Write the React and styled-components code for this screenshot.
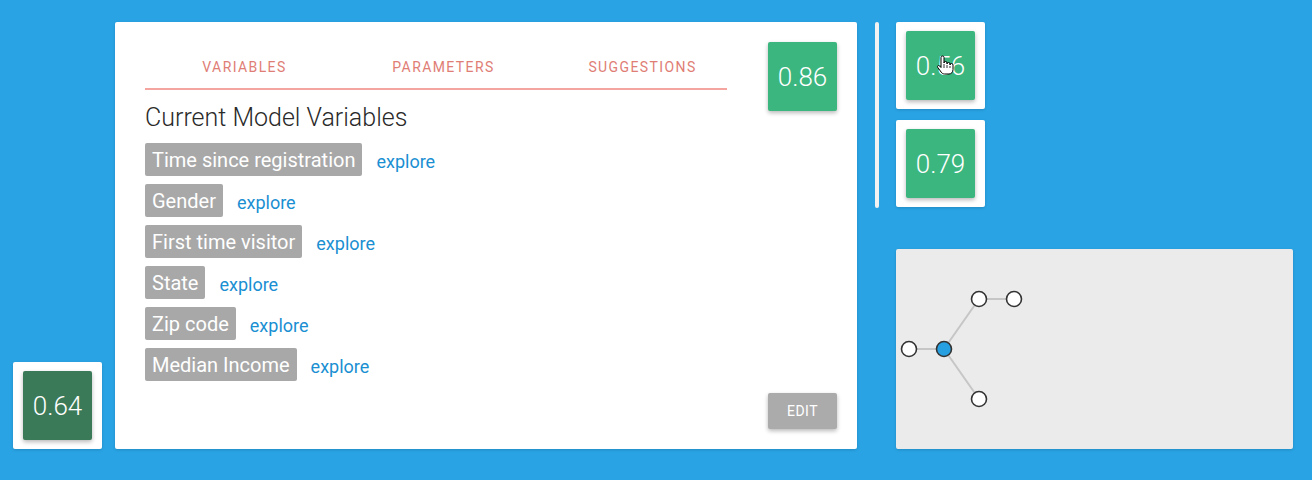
import React from "react";
import styled, { createGlobalStyle } from "styled-components";

const Global = createGlobalStyle`
  html, body { margin: 0; padding: 0; }
  body { font-family: Roboto, "Noto Sans", "Liberation Sans", sans-serif; background: #29a3e4; }
`;

const Page = styled.div`
  width: 1312px;
  height: 480px;
  box-sizing: border-box;
  background: #29a3e4;
  display: flex;
  align-items: flex-start;
  padding: 22px 0 0 13px;
  overflow: hidden;
`;

const SideCard = styled.div`
  width: 89px;
  height: 87px;
  box-sizing: border-box;
  background: #fff;
  border-radius: 2px;
  box-shadow: 0 1px 3px rgba(0, 0, 0, 0.15);
  display: flex;
  align-items: center;
  justify-content: center;
  position: relative;
`;

const LeftCol = styled.div`
  align-self: flex-end;
  margin-bottom: 31px;
`;

const Score = styled.div`
  width: 69px;
  height: 69px;
  background: ${(p) => (p.$dark ? "#3b7a58" : "#3bb67e")};
  border-radius: 2px;
  box-shadow: 0 2px 4px rgba(0, 0, 0, 0.28);
  color: #fff;
  font-weight: 300;
  font-size: 26px;
  display: flex;
  align-items: center;
  justify-content: center;
`;

const MainCard = styled.div`
  margin-left: 13px;
  width: 742px;
  height: 427px;
  box-sizing: border-box;
  background: #fff;
  border-radius: 2px;
  box-shadow: 0 1px 3px rgba(0, 0, 0, 0.15);
  padding: 20px 20px 20px 30px;
  display: flex;
  justify-content: space-between;
`;

const Content = styled.div`
  display: flex;
  flex-direction: column;
`;

const Tabs = styled.div`
  display: flex;
  width: 582px;
  height: 46px;
  border-bottom: 2px solid #f4a5a0;
`;

const Tab = styled.div`
  flex: 0 0 199px;
  display: flex;
  align-items: center;
  justify-content: center;
  font-size: 14px;
  letter-spacing: 1.4px;
  color: #e07d75;
  text-transform: uppercase;
  padding-top: 3px;
`;

const Heading = styled.h2`
  margin: 13px 0 0;
  font-size: 25px;
  line-height: 30px;
  font-weight: 300;
  color: #2a2a2a;
`;

const Rows = styled.div`
  margin-top: 10px;
  display: flex;
  flex-direction: column;
  gap: 8px;
`;

const Row = styled.div`
  display: flex;
  align-items: center;
`;

const Tag = styled.span`
  height: 33px;
  display: inline-flex;
  align-items: center;
  padding: 0 7px;
  background: #a8a8a8;
  color: #fff;
  border-radius: 2px;
  font-size: 20px;
`;

const Explore = styled.a`
  margin-left: 14px;
  color: #1a8fd2;
  font-size: 18px;
  text-decoration: none;
  padding-top: 3px;
`;

const Aside = styled.div`
  display: flex;
  flex-direction: column;
  justify-content: space-between;
  align-items: flex-end;
`;

const EditButton = styled.button`
  width: 69px;
  height: 36px;
  border: none;
  border-radius: 2px;
  background: #ababab;
  color: #fff;
  font-family: inherit;
  font-size: 14px;
  letter-spacing: 0.5px;
  box-shadow: 0 2px 4px rgba(0, 0, 0, 0.28);
`;

const Divider = styled.div`
  margin-left: 18px;
  width: 4px;
  height: 186px;
  border-radius: 2px;
  background: #f2f2f2;
`;

const RightCol = styled.div`
  margin-left: 17px;
  width: 397px;
  height: 427px;
  display: flex;
  flex-direction: column;
  gap: 11px;
`;

const GraphPanel = styled.div`
  margin-top: auto;
  height: 200px;
  background: #ebebeb;
  border-radius: 2px;
  box-shadow: 0 1px 3px rgba(0, 0, 0, 0.15);
`;

const Cursor = styled.svg`
  position: absolute;
  left: 40px;
  top: 33px;
`;

const variables = [
  "Time since registration",
  "Gender",
  "First time visitor",
  "State",
  "Zip code",
  "Median Income",
];

const nodes = [
  { x: 13, y: 100 },
  { x: 48, y: 100, active: true },
  { x: 83, y: 50 },
  { x: 118, y: 50 },
  { x: 83, y: 150 },
];
const edges = [
  [0, 1],
  [1, 2],
  [2, 3],
  [1, 4],
];

export default function App() {
  return (
    <>
      <Global />
      <Page>
        <LeftCol>
          <SideCard>
            <Score $dark>0.64</Score>
          </SideCard>
        </LeftCol>
        <MainCard>
          <Content>
            <Tabs>
              <Tab>Variables</Tab>
              <Tab>Parameters</Tab>
              <Tab>Suggestions</Tab>
            </Tabs>
            <Heading>Current Model Variables</Heading>
            <Rows>
              {variables.map((v) => (
                <Row key={v}>
                  <Tag>{v}</Tag>
                  <Explore href="#">explore</Explore>
                </Row>
              ))}
            </Rows>
          </Content>
          <Aside>
            <Score>0.86</Score>
            <EditButton>EDIT</EditButton>
          </Aside>
        </MainCard>
        <Divider />
        <RightCol>
          <SideCard>
            <Score>0.56</Score>
            <Cursor width="18" height="21" viewBox="0 0 18 21">
              <path
                d="M5 2.5a1.5 1.5 0 0 1 3 0V8a1.5 1.5 0 0 1 3 0v1a1.5 1.5 0 0 1 3 0v1a1.5 1.5 0 0 1 3 0v4.5c0 2.5-1.6 4.5-4 4.5H8.5c-1.5 0-2.6-.8-3.4-2L1.6 12.2c-.6-1.1.9-2.3 1.9-1.3L5 12.5Z"
                fill="#fff"
                stroke="#000"
                strokeWidth="1"
              />
              <path d="M8 9v4M11 10v3M14 11v2" stroke="#000" strokeWidth="0.8" />
            </Cursor>
          </SideCard>
          <SideCard>
            <Score>0.79</Score>
          </SideCard>
          <GraphPanel>
            <svg width="397" height="200" viewBox="0 0 397 200">
              {edges.map(([a, b], i) => (
                <line
                  key={i}
                  x1={nodes[a].x}
                  y1={nodes[a].y}
                  x2={nodes[b].x}
                  y2={nodes[b].y}
                  stroke="#c6c6c6"
                  strokeWidth="2"
                />
              ))}
              {nodes.map((n, i) => (
                <circle
                  key={i}
                  cx={n.x}
                  cy={n.y}
                  r="7.5"
                  fill={n.active ? "#27a0e2" : "#fff"}
                  stroke="#333"
                  strokeWidth="1.6"
                />
              ))}
            </svg>
          </GraphPanel>
        </RightCol>
      </Page>
    </>
  );
}
